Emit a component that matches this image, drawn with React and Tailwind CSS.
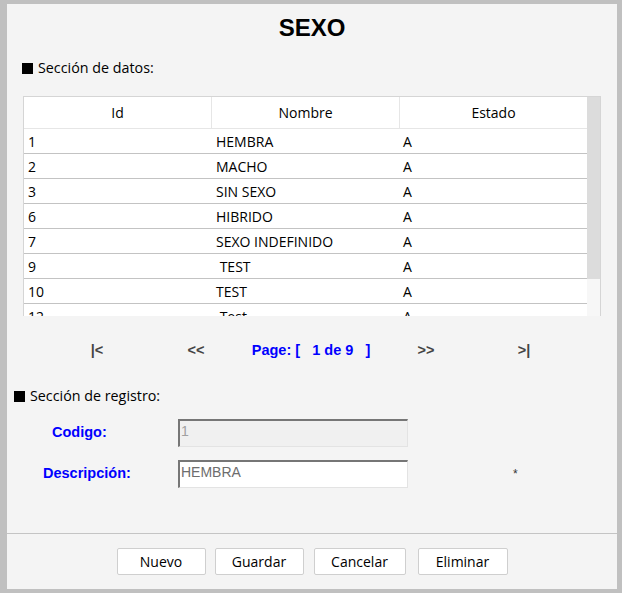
import React from "react";

const seg = { fontFamily: '"Open Sans", "Noto Sans", sans-serif' };
const ari = { fontFamily: '"Liberation Sans", Arial, sans-serif' };

const rows = [
  ["1", "HEMBRA", "A"],
  ["2", "MACHO", "A"],
  ["3", "SIN SEXO", "A"],
  ["6", "HIBRIDO", "A"],
  ["7", "SEXO INDEFINIDO", "A"],
  ["9", "\u00a0TEST", "A"],
  ["10", "TEST", "A"],
  ["12", "\u00a0Test", "A"],
];

function Square({ className = "" }) {
  return <span className={"inline-block w-[11px] h-[11px] bg-black " + className} />;
}

export default function App() {
  return (
    <div className="w-[622px] h-[593px] bg-[#c0c0c0] pt-[4px] pl-[7px] pr-[5px] pb-[4px]">
      <div className="w-full h-full bg-[#f4f4f4] flex flex-col">
        <div className="h-[48px] flex items-center justify-center text-[24px] font-bold text-black" style={ari}>
          SEXO
        </div>

        <div className="mt-[6px] h-[20px] flex items-center pl-[15px] text-[14.3px] text-black" style={seg}>
          <Square />
          <span className="ml-[5px]">Sección de datos:</span>
        </div>

        <div className="mt-[18px] ml-[16px] w-[578px] h-[220px] border-t border-l border-r border-[#d5d5d5] flex overflow-hidden">
          <div className="w-[563px] bg-white text-[14px] text-black" style={seg}>
            <div className="grid grid-cols-[187px_188px_188px] h-[32px] border-b border-[#e6e6e6]">
              <div className="flex items-center justify-center">Id</div>
              <div className="flex items-center justify-center border-l border-[#e6e6e6]">Nombre</div>
              <div className="flex items-center justify-center border-l border-[#e6e6e6]">Estado</div>
            </div>
            {rows.map((r, i) => (
              <div key={i} className="grid grid-cols-[187px_188px_188px] h-[25px] border-b border-[#c3c3c3]">
                <div className="flex items-center pl-[4px]">{r[0]}</div>
                <div className="flex items-center pl-[5px]">{r[1]}</div>
                <div className="flex items-center pl-[4px]">{r[2]}</div>
              </div>
            ))}
          </div>
          <div className="w-[13px] flex flex-col">
            <div className="h-[182px] bg-[#dcdcdc]" />
            <div className="flex-1 bg-[#f7f7f7]" />
          </div>
        </div>

        <div className="mt-[25px] h-[20px] flex items-center text-[14.5px] font-bold" style={ari}>
          <span className="ml-[65px] w-[50px] text-center text-[#444]">|&lt;</span>
          <span className="ml-[49px] w-[50px] text-center text-[#444]">&lt;&lt;</span>
          <span className="ml-[10px] w-[160px] text-center text-[#0000ff] whitespace-pre">Page: [   1 de 9   ]</span>
          <span className="ml-[10px] w-[50px] text-center text-[#444]">&gt;&gt;</span>
          <span className="ml-[48px] w-[50px] text-center text-[#444]">&gt;|</span>
        </div>

        <div className="mt-[25px] h-[20px] flex items-center pl-[7px] text-[14.3px] text-black" style={seg}>
          <Square />
          <span className="ml-[5px]">Sección de registro:</span>
        </div>

        <div className="mt-[13px] h-[28px] flex items-center" style={ari}>
          <span className="w-[171px] pl-[45px] text-[14.5px] font-bold text-[#0000ff]">Codigo:</span>
          <div className="w-[230px] h-[28px] bg-[#f0f0f0] border-t-2 border-l-2 border-b border-r border-t-[#767676] border-l-[#767676] border-b-[#e3e3e3] border-r-[#e3e3e3] pl-[1px] pt-[1px] text-[14px] leading-[18px] text-[#a0a0a0]">
            1
          </div>
        </div>

        <div className="mt-[13px] h-[28px] flex items-center" style={ari}>
          <span className="w-[171px] pl-[36px] text-[14.5px] font-bold text-[#0000ff]">Descripción:</span>
          <div className="w-[230px] h-[28px] bg-white border-t-2 border-l-2 border-b border-r border-t-[#767676] border-l-[#767676] border-b-[#e3e3e3] border-r-[#e3e3e3] pl-[1px] pt-[1px] text-[14px] leading-[18px] text-[#6d6d6d]">
            HEMBRA
          </div>
          <span className="ml-[105px] text-[12px] text-[#333]">*</span>
        </div>

        <div className="mt-auto h-[56px] border-t border-[#c4c4c4] flex justify-center pt-[14px] gap-[9px] text-[14px] text-black" style={seg}>
          <button className="w-[89px] h-[27px] bg-white border border-[#cfcfcf] rounded-[2px]">Nuevo</button>
          <button className="w-[89px] h-[27px] bg-white border border-[#cfcfcf] rounded-[2px]">Guardar</button>
          <button className="w-[92px] h-[27px] bg-white border border-[#cfcfcf] rounded-[2px] ml-[1px]">Cancelar</button>
          <button className="w-[90px] h-[27px] bg-white border border-[#cfcfcf] rounded-[2px] ml-[3px]">Eliminar</button>
        </div>
      </div>
    </div>
  );
}
